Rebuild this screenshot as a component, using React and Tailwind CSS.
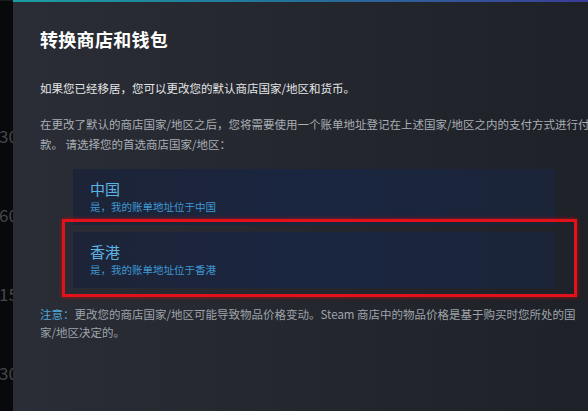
import React from "react"

const FONT = "font-['Noto_Sans_CJK_SC','Noto_Sans',Arial,sans-serif]"

const regions = [
  { name: "中国", note: "是，我的账单地址位于中国" },
  { name: "香港", note: "是，我的账单地址位于香港" },
]

// faint timeline numbers peeking out from behind the dialog
const ticks = ["30", "60", "15", "30"]

export default function App() {
  return (
    <div className={`w-[588px] h-[411px] flex overflow-hidden bg-[#08090b] ${FONT}`}>
      {/* Left strip behind the dialog */}
      <div className="w-[13px] shrink-0 overflow-hidden flex flex-col pt-[126px] gap-[62px] border-t border-[#1a1c20]">
        {ticks.map((t, i) => (
          <span key={i} className="text-[17px] leading-[17px] text-[#44474c] whitespace-nowrap -ml-[1px]">
            {t}
          </span>
        ))}
      </div>

      {/* Dialog */}
      <div className="relative flex-1 bg-gradient-to-r from-[#2a2d35] via-[#24272e] to-[#1f2128]">
        <div className="h-[2px] bg-gradient-to-r from-[#1b9ea0] via-[#23709a] to-[#3a3c98]" />

        <div className="pl-[27px] pt-[25px]">
          <h1 className="text-[18px] leading-[24px] font-bold text-white tracking-[0.3px]">转换商店和钱包</h1>

          <p className="mt-[29px] text-[11.5px] leading-[16px] text-[#e4e6e8] whitespace-nowrap">
            如果您已经移居，您可以更改您的默认商店国家/地区和货币。
          </p>

          <p className="mt-[18px] text-[11.5px] leading-[20px] text-[#a9afb5] whitespace-nowrap">
            在更改了默认的商店国家/地区之后，您将需要使用一个账单地址登记在上述国家/地区之内的支付方式进行付
            <br />
            款。 请选择您的首选商店国家/地区：
          </p>

          {/* Country options */}
          <div className="mt-[15px] ml-[33px] w-[482px] flex flex-col gap-[7px]">
            {regions.map((r) => (
              <div
                key={r.name}
                className="h-[56px] bg-gradient-to-r from-[#1d2437] via-[#1a2540] to-[#1b2438] pl-[17px] pt-[10px]"
              >
                <div className="text-[15px] leading-[20px] text-[#5fb4e6]">{r.name}</div>
                <div className="mt-[1px] text-[10.5px] leading-[14px] text-[#3f98d2]">{r.note}</div>
              </div>
            ))}
          </div>

          <p className="mt-[17px] text-[11.5px] leading-[18px] text-[#9ea4aa] whitespace-nowrap">
            <span className="text-[#4fa9dc]">注意：</span>
            更改您的商店国家/地区可能导致物品价格变动。Steam 商店中的物品价格是基于购买时您所处的国
            <br />
            家/地区决定的。
          </p>
        </div>

        {/* Red highlight drawn over the selected option */}
        <div className="absolute left-[49px] top-[219px] w-[515px] h-[78px] border-[3px] border-[#e3121a] shadow-[0_0_4px_rgba(255,0,0,0.6)]" />
      </div>
    </div>
  )
}
